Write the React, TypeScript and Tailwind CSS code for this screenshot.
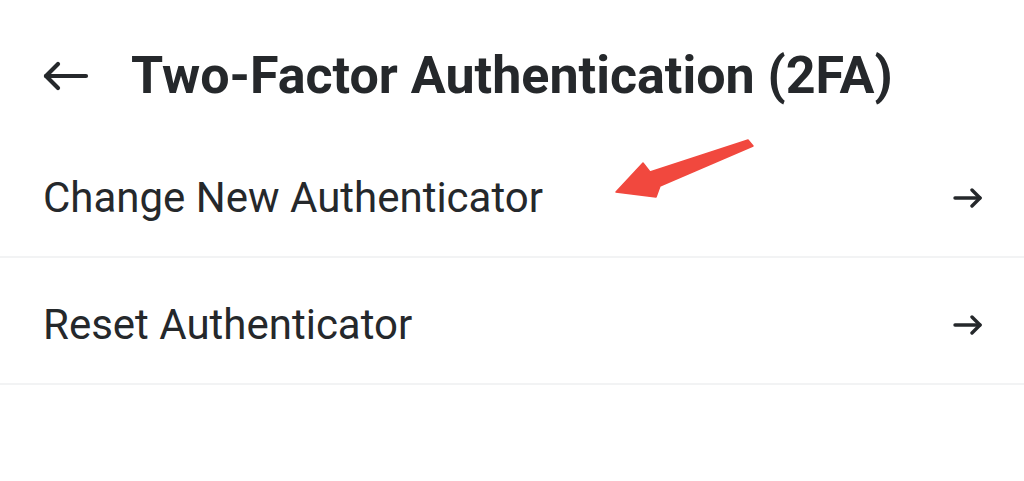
import { ReactNode } from "react";

const rows = [
    { label: "Change New Authenticator" },
    { label: "Reset Authenticator" },
];

function ArrowLeft() {
    return (
        <svg width="46" height="30" viewBox="0 0 46 30" fill="none" stroke="#25282b" strokeWidth="4.2" strokeLinecap="round" strokeLinejoin="round">
            <path d="M43 15H3" />
            <path d="M15 3L3 15l12 12" />
        </svg>
    );
}

function ArrowRight() {
    return (
        <svg width="30" height="20" viewBox="0 0 30 20" fill="none" stroke="#25282b" strokeWidth="3.4" strokeLinecap="round" strokeLinejoin="round">
            <path d="M2 10h25" />
            <path d="M19 2l8 8-8 8" />
        </svg>
    );
}

function Row({ label, children }: { label: string; children?: ReactNode }) {
    return (
        <div className="flex h-[127px] items-center justify-between border-b-2 border-[#f2f3f4] pl-[43px] pr-[41px] pt-[8px]">
            <span className="text-[42px] leading-none text-[#25282b]">{label}</span>
            {children}
            <ArrowRight />
        </div>
    );
}

export default function App() {
    return (
        <div className="relative h-[481px] w-[1024px] overflow-hidden bg-white" style={{ fontFamily: 'Roboto, "Noto Sans", sans-serif' }}>
            <div className="flex h-[131px] items-center gap-[42px] pl-[43px] pt-[21px]">
                <ArrowLeft />
                <h1 className="text-[52px] font-bold leading-none tracking-normal text-[#25282b]">Two-Factor Authentication (2FA)</h1>
            </div>
            {rows.map((r) => (
                <Row key={r.label} label={r.label} />
            ))}
            {/* red annotation arrow */}
            <svg className="absolute left-0 top-0" width="1024" height="481" viewBox="0 0 1024 481">
                <polygon points="616,192 643,163 650,172 748,140 753,146 660,186 656,197" fill="#f1483e" strokeLinejoin="round" stroke="#f1483e" strokeWidth="1.5" />
            </svg>
        </div>
    );
}
